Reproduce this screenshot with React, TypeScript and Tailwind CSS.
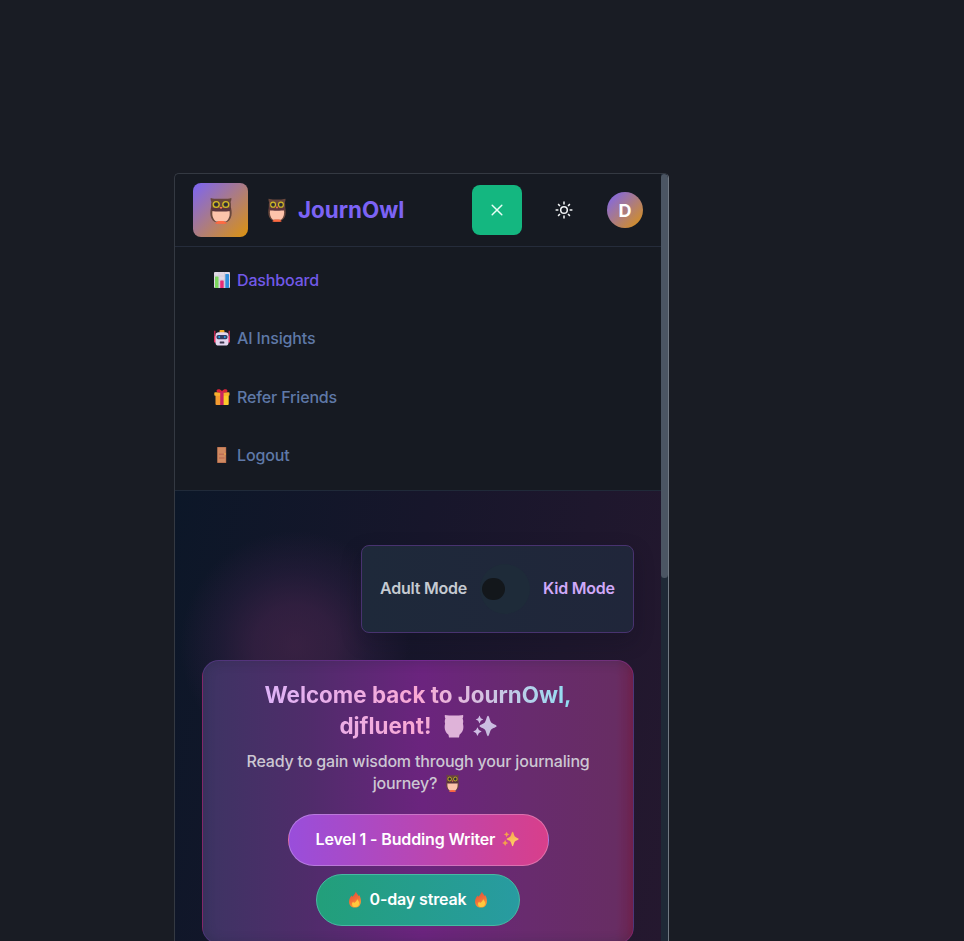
import React from "react";

type IconProps = { className?: string };

function Owl({ className = "" }: IconProps) {
  return (
    <svg viewBox="0 0 22 28" className={className} preserveAspectRatio="none">
      <path d="M7.500 23.500h7l2.300 4H5.200z" fill="#f4603c" />
      <path d="M.7 1C4 2 7 1.800 11 1.800S18 2 21.300 1C21.700 2.800 21 4.200 20.600 5.200 21.500 8 20.600 9.500 21.200 12 22.400 18 21.500 23 17 26H5C.5 23-.4 18 .8 12 1.400 9.500.5 8 1.400 5.200 1 4.200.3 2.800.7 1z" fill="#69473c" />
      <path d="M2.700 13.500h16.600c1 4.800.2 9-3.300 12H6C2.500 22.500 1.700 18.300 2.700 13.500z" fill="#fdc3ab" />
      <path d="M1 11.200h20l-1 3.200c-3 .7-15 .7-18 0z" fill="#5b343c" />
      <path d="M8 25h6l1.800 2.700H6.200z" fill="#ff6b42" />
      <circle cx="6.200" cy="7.800" r="3" fill="#443c35" stroke="#d2bb25" strokeWidth="1.300" />
      <circle cx="15.800" cy="7.800" r="3" fill="#443c35" stroke="#d2bb25" strokeWidth="1.300" />
      <circle cx="6.200" cy="7.800" r="1.400" fill="#292937" />
      <circle cx="15.800" cy="7.800" r="1.400" fill="#292937" />
      <path d="M9.400 10.300h3.200L11 12.600z" fill="#ff8050" />
    </svg>
  );
}

function OwlSilhouette({ className = "" }: IconProps) {
  return (
    <svg viewBox="0 0 20 24" className={className} preserveAspectRatio="none">
      <path d="M.9 1c5 .8 13.200.8 18.200 0 .3 1.500 0 2.500-.5 3.500.8 2 .8 3.500.3 5 1.200 4.500.3 8.500-3.400 11.300L15 23.500H5l-.5-2.700C.8 18 0 14 1.100 9.500c-.5-1.500-.5-3 .3-5C.9 3.500.6 2.500.9 1z" fill="#dfb3d9" />
    </svg>
  );
}

function Sparkles({ className = "", from, to }: IconProps & { from: string; to: string }) {
  const id = "spark" + from.slice(1);
  return (
    <svg viewBox="0 0 24 22" className={className}>
      <defs>
        <linearGradient id={id} x1="0" y1="0" x2="0.3" y2="1">
          <stop offset="0" stopColor={from} />
          <stop offset="1" stopColor={to} />
        </linearGradient>
      </defs>
      <path d="M15 .8c1.200 0 1.700 4.700 3.200 6.600 1.400 1.700 5.500 2.300 5.500 3.600s-4.100 1.900-5.500 3.600c-1.500 1.900-2 6.600-3.200 6.600s-1.700-4.700-3.200-6.600C10.400 12.900 6.500 12.300 6.500 11s3.900-1.900 5.300-3.600C13.300 5.500 13.800.8 15 .8z" fill={"url(#" + id + ")"} />
      <path d="M6.500.6l1.300 2.600 2.500 1.300-2.500 1.200-1.300 2.800-1.300-2.800-2.500-1.200 2.500-1.300zM4.500 12.200l1.400 2.900 2.800 1.400-2.800 1.400-1.400 3.100-1.500-3.100-2.800-1.400L3 15.100z" fill={from} />
    </svg>
  );
}

function BarChart() {
  return (
    <svg viewBox="0 0 16 16" className="size-4">
      <rect width="16" height="16" rx="1" fill="#dfd8e5" />
      <path d="M0 4h16M0 8h16M0 12h16M5 0v16M10.500 0v16" stroke="#c6bece" strokeWidth=".5" />
      <rect x="1" y="4.500" width="3.500" height="11.500" rx=".6" fill="#7bd65d" />
      <rect x="6.200" y="8.500" width="3.500" height="7.500" rx=".6" fill="#e62c75" />
      <rect x="11.300" y="2" width="3.700" height="14" rx=".6" fill="#2f8fdc" />
    </svg>
  );
}

function Robot() {
  return (
    <svg viewBox="0 0 16 16" className="size-4">
      <rect x="5.500" y="0" width="5" height="3" rx="1" fill="#f3ab26" />
      <path d="M.8 .8v11.500M15.200 .8v11.500" stroke="#df2655" strokeWidth="1.200" />
      <rect x="0" y="6" width="2.500" height="6.500" rx="1" fill="#e93360" />
      <rect x="13.500" y="6" width="2.500" height="6.500" rx="1" fill="#e93360" />
      <rect x="1.500" y="2.200" width="13" height="13.400" rx="3.200" fill="#e3d6ee" />
      <rect x="2.500" y="5" width="11" height="4.200" rx="1.600" fill="#353d63" />
      <circle cx="5.200" cy="7.100" r="1" fill="#25a7e7" />
      <circle cx="10.800" cy="7.100" r="1" fill="#25a7e7" />
      <rect x="5.700" y="11.600" width="4.600" height="1.800" rx=".5" fill="#39334d" />
    </svg>
  );
}

function Gift() {
  return (
    <svg viewBox="0 0 16 16" className="size-4">
      <rect x="1.500" y="5" width="13" height="11" rx="1" fill="#f49b31" />
      <path d="M9 5h5.500v10.200a.8.800 0 01-.8.800H9z" fill="#fccb2a" />
      <rect x=".3" y="3.200" width="15.200" height="3.600" rx=".8" fill="#f9b12e" />
      <path d="M8 3.600C5 4 2.600 3.500 2.500 2 2.400.2 6-.6 8 2.200 10-.6 13.600.2 13.500 2c-.1 1.500-2.500 2-5.500 1.600z" fill="#dc2438" />
      <rect x="6.200" y="2.500" width="3.400" height="13.500" fill="#ca2360" />
    </svg>
  );
}

function Door() {
  return (
    <svg viewBox="0 0 16 16" className="size-4">
      <rect x="3.200" y="0" width="9" height="16" rx=".5" fill="#b96f4e" />
      <rect x="3.800" y=".6" width="7.700" height="14.600" fill="#d08a62" />
      <path d="M5 7.200h5.500M5 11h5.500" stroke="#b45c4c" strokeWidth=".8" />
      <circle cx="11" cy="7" r=".8" fill="#fbb846" />
    </svg>
  );
}

function Flame({ className = "" }: IconProps) {
  return (
    <svg viewBox="0 0 14 18" className={className}>
      <defs>
        <linearGradient id="flame" x1="0" y1="0" x2="0.4" y2="1">
          <stop offset="0" stopColor="#e0483d" />
          <stop offset=".6" stopColor="#f06f38" />
          <stop offset="1" stopColor="#ff9a36" />
        </linearGradient>
      </defs>
      <path d="M8 .5c.6 2.500 2 3.200 3 4.800l.8-.8c.8 2 1.500 3.700 1.500 6 0 4.500-2.600 7-6.300 7S.5 15 .7 11C.9 8 2.200 6.500 3.200 4.800l.8 1.400C5.800 4.500 7.300 2.700 8 .5z" fill="url(#flame)" />
      <path d="M9.300 8.800c2.300 2.700 2.900 5 1.200 6.900-1.700 1.800-5.200 1.600-6.300-.4-.7-1.500-.2-2.800.8-3.800l1 1.200c1.500-.7 2.800-2 3.300-3.900z" fill="#ffc93d" />
    </svg>
  );
}

function Header() {
  return (
    <header className="flex h-[73px] items-center border-b border-[#252c3b] pl-[18px]">
      <div className="flex h-[54px] w-[55px] shrink-0 items-center justify-center rounded-[8px] bg-[linear-gradient(135deg,#7b64f6,#dc930e)]">
        <Owl className="h-[27px] w-[22px]" />
      </div>
      <Owl className="ml-[20px] h-[24px] w-[18px]" />
      <h1 className="ml-[12px] w-[174px] text-[22.4px] leading-8 font-bold whitespace-nowrap text-[#7c63f5]">JournOwl</h1>
      <button className="flex size-[50px] shrink-0 items-center justify-center rounded-[8px] bg-[#14b780]">
        <svg viewBox="0 0 12 12" className="size-3" fill="none" stroke="#e9fff6" strokeWidth="1.500" strokeLinecap="round">
          <path d="M1.200 1.200l9.600 9.600M10.800 1.200l-9.600 9.600" />
        </svg>
      </button>
      <button className="ml-[33px] flex size-[18px] shrink-0 items-center justify-center">
        <svg viewBox="0 0 18 18" className="size-[18px]" fill="none" stroke="#f1f3f5" strokeWidth="1.500">
          <circle cx="9" cy="9" r="3.300" />
          <path d="M9 .6v2.800M9 14.600v2.800M.6 9h2.800M14.600 9h2.800M3.100 3.100l1.900 1.900M13 13l1.900 1.900M3.100 14.900l1.900-1.900M13 5l1.900-1.900" />
        </svg>
      </button>
      <div className="ml-[34px] flex size-9 shrink-0 items-center justify-center rounded-full bg-[linear-gradient(135deg,#7b64f6,#dc930e)] text-[18px] font-bold text-white">D</div>
    </header>
  );
}

const links = [
  { label: "Dashboard", icon: <BarChart />, color: "text-[#7259e8]" },
  { label: "AI Insights", icon: <Robot />, color: "text-[#5f79a8]" },
  { label: "Refer Friends", icon: <Gift />, color: "text-[#5f79a8]" },
  { label: "Logout", icon: <Door />, color: "text-[#5f79a8]" },
];

function Navigation() {
  return (
    <nav className="h-[244px] border-b border-[#202a39] pt-[4px]">
      {links.map((link) => (
        <a key={link.label} className={"flex h-[58.3px] items-center gap-[7px] pl-[39px] text-[16px] font-medium tracking-[-0.15px] " + link.color}>
          {link.icon}
          <span>{link.label}</span>
        </a>
      ))}
    </nav>
  );
}

function ModeSwitch() {
  return (
    <div className="ml-auto flex h-[88px] w-[273px] items-center rounded-[8px] border border-[#48336f] bg-[linear-gradient(90deg,#1e293a,#20263a)] pl-[18px] text-[16px] font-semibold tracking-[-0.22px] shadow-[0_8px_20px_#0a0c1d40]">
      <span className="w-[98px] pb-[2px] whitespace-nowrap text-[#c5cad1]">Adult Mode</span>
      <span className="ml-[2px] flex size-[50px] shrink-0 items-center rounded-full bg-[#1e2b39] pl-[2px]">
        <span className="h-[22px] w-[23px] rounded-full bg-[#13171b]" />
      </span>
      <span className="ml-[13px] pb-[2px] whitespace-nowrap text-[#d0a9f8]">Kid Mode</span>
    </div>
  );
}

function WelcomeCard() {
  return (
    <section className="mt-[27px] h-[284px] w-[432px] rounded-[17px] border border-[#b04cff26] bg-[linear-gradient(to_right,#3d3463_0%,#4f2c6a_24%,#6b247e_51%,#682b6e_75%,#672d63_96%,#6d2859_98.500%,#7c204f_100%)] pt-[18px] text-center shadow-[inset_0_0_12px_#1e25364d]">
      <h2 className="mx-[32px] bg-linear-to-r from-[#d8b4fe] via-[#f9a8d4] to-[#67e8f9] bg-clip-text text-[22.4px] leading-[31px] font-bold whitespace-nowrap text-transparent">
        Welcome back to JournOwl,
        <br />
        <span className="inline-flex h-[31px] items-center">
          djfluent!
          <OwlSilhouette className="ml-[12px] h-[24px] w-[20px]" />
          <Sparkles className="ml-[9px] h-[22px] w-[24px]" from="#d0bee5" to="#c6bddd" />
        </span>
      </h2>
      <p className="mt-[9px] text-[16px] leading-[22px] font-[450] tracking-[-0.18px] whitespace-nowrap text-[#ccc7d2]">
        Ready to gain wisdom through your journaling
        <br />
        <span className="inline-flex items-center">
          journey?
          <Owl className="mr-[4px] ml-[9px] h-[18px] w-[13px]" />
        </span>
      </p>
      <div className="mt-[20px] flex flex-col items-center gap-2 text-[16px] font-semibold text-white">
        <div className="flex h-[52px] w-[261px] items-center rounded-full border border-white/25 bg-[linear-gradient(90deg,#994edb,#d83f8b)] pb-[2px] pl-[27px] tracking-[-0.15px]">
          <span className="w-[179px] whitespace-nowrap">Level 1 - Budding Writer</span>
          <Sparkles className="ml-[7px] h-[16px] w-[17px]" from="#f5a14b" to="#ffd066" />
        </div>
        <div className="flex h-[52px] w-[204px] items-center justify-center gap-[8px] rounded-full border border-[#47baa2] bg-[linear-gradient(90deg,#229f7a,#289ba1)] pb-[2px] tracking-[-0.15px]">
          <Flame className="h-[17px] w-[14px]" />
          <span className="whitespace-nowrap">0-day streak</span>
          <Flame className="h-[17px] w-[14px]" />
        </div>
      </div>
    </section>
  );
}

export default function App() {
  return (
    <div className="h-[941px] overflow-hidden bg-[#191c24] pt-[173px] pl-[174px] font-['Inter','Noto_Sans',sans-serif]">
      <div className="flex h-[780px] w-[495px] overflow-hidden rounded-t-[5px] border border-[#343942] border-r-[#727983] bg-[#161a22]">
        <div className="w-[486px] shrink-0">
          <Header />
          <Navigation />
          <main className="h-[470px] bg-[radial-gradient(circle_115px_at_120px_155px,#4b264fa6_0%,#44244d99_35%,#34204666_65%,transparent_100%),linear-gradient(102deg,#0c1728_0%,#17162b_44%,#25182f_100%)] pt-[54px] pr-[27px] pl-[27px]">
            <ModeSwitch />
            <WelcomeCard />
          </main>
        </div>
        <div className="w-[7px] shrink-0 bg-[#1f2937]">
          <div className="h-[404px] rounded-[4px] bg-[#4b5563]" />
        </div>
      </div>
    </div>
  );
}
